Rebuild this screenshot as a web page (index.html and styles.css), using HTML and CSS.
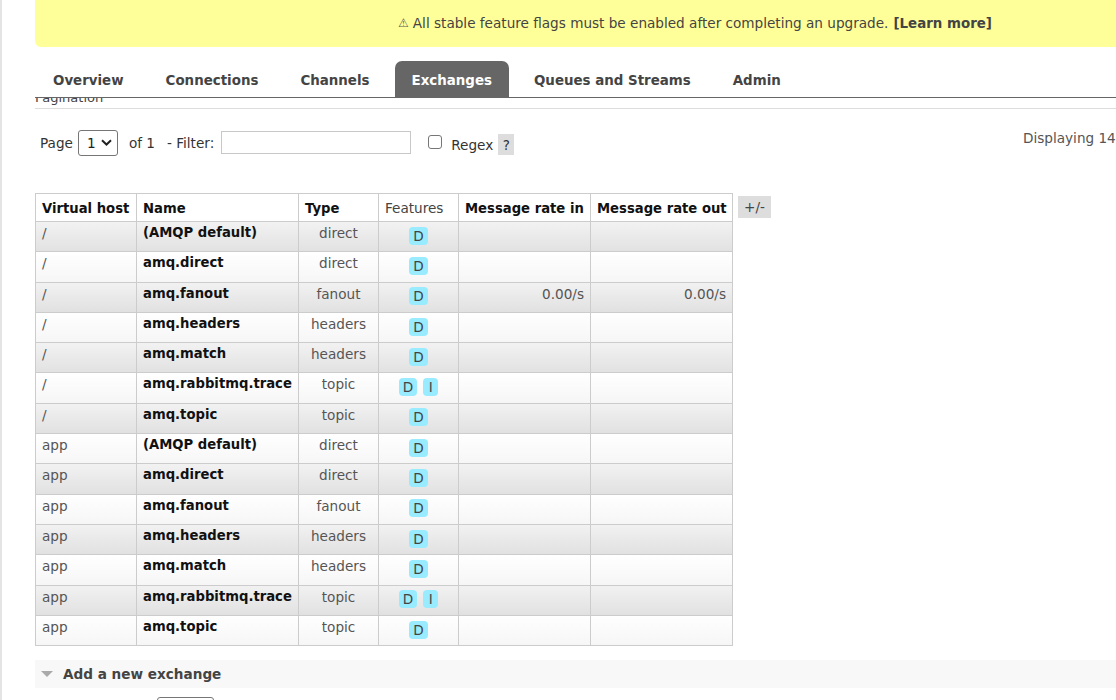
FILE: index.html
```html
<!DOCTYPE html>
<html>
<head>
<meta charset="utf-8">
<link rel="stylesheet" href="styles.css">
</head>
<body>
<div class="frame">
  <div class="banner">
    <span class="warn">⚠</span><span>All stable feature flags must be enabled after completing an upgrade.</span><b class="learn">[Learn more]</b>
  </div>
  <ul class="tabs">
    <li>Overview</li>
    <li>Connections</li>
    <li>Channels</li>
    <li class="active">Exchanges</li>
    <li>Queues and Streams</li>
    <li>Admin</li>
  </ul>
  <div class="main">
    <h2 class="sec-title">Pagination</h2>
    <div class="pager">
      <div class="pager-left">
        <span class="lbl">Page</span>
        <span class="select"><span class="sel-val">1</span><svg class="chev" width="11" height="7" viewBox="0 0 11 7"><path d="M1 1.2 L5.5 5.5 L10 1.2" fill="none" stroke="#222" stroke-width="2"/></svg></span>
        <span class="of">of 1</span>
        <span class="filter-lbl">- Filter:</span>
        <span class="text-input"></span>
        <span class="checkbox"></span>
        <span class="regex">Regex</span>
        <span class="help">?</span>
      </div>
      <div class="pager-right">
        <span>Displaying 14 items , page size up to:</span>
        <span class="size-input">100</span>
      </div>
    </div>

    <div class="table-wrap">
      <table class="list">
        <thead>
          <tr>
            <th class="c-vhost">Virtual host</th>
            <th class="c-name">Name</th>
            <th class="c-type">Type</th>
            <th class="c-feat plain">Features</th>
            <th class="c-in">Message rate in</th>
            <th class="c-out">Message rate out</th>
          </tr>
        </thead>
        <tbody>
          <tr class="alt1"><td>/</td><td class="name">(AMQP default)</td><td class="ctr">direct</td><td class="feat"><abbr>D</abbr></td><td class="num"></td><td class="num"></td></tr>
          <tr class="alt2"><td>/</td><td class="name">amq.direct</td><td class="ctr">direct</td><td class="feat"><abbr>D</abbr></td><td class="num"></td><td class="num"></td></tr>
          <tr class="alt1"><td>/</td><td class="name">amq.fanout</td><td class="ctr">fanout</td><td class="feat"><abbr>D</abbr></td><td class="num">0.00/s</td><td class="num">0.00/s</td></tr>
          <tr class="alt2"><td>/</td><td class="name">amq.headers</td><td class="ctr">headers</td><td class="feat"><abbr>D</abbr></td><td class="num"></td><td class="num"></td></tr>
          <tr class="alt1"><td>/</td><td class="name">amq.match</td><td class="ctr">headers</td><td class="feat"><abbr>D</abbr></td><td class="num"></td><td class="num"></td></tr>
          <tr class="alt2"><td>/</td><td class="name">amq.rabbitmq.trace</td><td class="ctr">topic</td><td class="feat"><abbr>D</abbr><abbr>I</abbr></td><td class="num"></td><td class="num"></td></tr>
          <tr class="alt1"><td>/</td><td class="name">amq.topic</td><td class="ctr">topic</td><td class="feat"><abbr>D</abbr></td><td class="num"></td><td class="num"></td></tr>
          <tr class="alt2"><td>app</td><td class="name">(AMQP default)</td><td class="ctr">direct</td><td class="feat"><abbr>D</abbr></td><td class="num"></td><td class="num"></td></tr>
          <tr class="alt1"><td>app</td><td class="name">amq.direct</td><td class="ctr">direct</td><td class="feat"><abbr>D</abbr></td><td class="num"></td><td class="num"></td></tr>
          <tr class="alt2"><td>app</td><td class="name">amq.fanout</td><td class="ctr">fanout</td><td class="feat"><abbr>D</abbr></td><td class="num"></td><td class="num"></td></tr>
          <tr class="alt1"><td>app</td><td class="name">amq.headers</td><td class="ctr">headers</td><td class="feat"><abbr>D</abbr></td><td class="num"></td><td class="num"></td></tr>
          <tr class="alt2"><td>app</td><td class="name">amq.match</td><td class="ctr">headers</td><td class="feat"><abbr>D</abbr></td><td class="num"></td><td class="num"></td></tr>
          <tr class="alt1"><td>app</td><td class="name">amq.rabbitmq.trace</td><td class="ctr">topic</td><td class="feat"><abbr>D</abbr><abbr>I</abbr></td><td class="num"></td><td class="num"></td></tr>
          <tr class="alt2"><td>app</td><td class="name">amq.topic</td><td class="ctr">topic</td><td class="feat"><abbr>D</abbr></td><td class="num"></td><td class="num"></td></tr>
        </tbody>
      </table>
      <span class="plus-minus">+/-</span>
    </div>

    <div class="add-section">
      <span class="tri"></span>
      <span class="add-title">Add a new exchange</span>
    </div>
    <div class="form-row">
      <span class="form-lbl">Virtual host:</span>
      <span class="form-select">/</span>
    </div>
  </div>
</div>
</body>
</html>
```

FILE: styles.css
```css
html {
  overflow: hidden;
}
body {
  margin: 0;
  font-family: "DejaVu Sans", Verdana, sans-serif;
  font-size: 13.6px;
  color: #484848;
  background: #fff;
}
.frame {
  border-left: 2px solid #e4e4e4;
  padding-left: 33px;
  width: 1320px;
  height: 700px;
}

/* banner */
.banner {
  height: 47px;
  background: #ffff99;
  border-radius: 0 0 6px 6px;
  display: flex;
  align-items: center;
  justify-content: center;
  color: #444;
  padding-bottom: 1px;
  box-sizing: border-box;
}
.warn {
  font-size: 12px;
  margin-right: 4px;
  color: #555;
}
.learn {
  margin-left: 5px;
  color: #444;
  font-size: 13.4px;
}

/* tabs */
.tabs {
  display: flex;
  list-style: none;
  margin: 14px 0 0;
  padding: 0 0 0 1px;
  border-bottom: 1px solid #666;
}
.tabs li {
  height: 36px;
  line-height: 39px;
  padding: 0 17px;
  margin-right: 8px;
  font-weight: bold;
  font-size: 13.4px;
  color: #444;
  border-radius: 7px 7px 0 0;
}
.tabs li.active {
  background: #666;
  color: #fff;
}

/* main scroll area */
.main {
  height: 602px;
  overflow: hidden;
}
.sec-title {
  margin: -8px 0 0;
  font-size: 13px;
  font-weight: normal;
  line-height: 16px;
  padding-bottom: 2px;
  border-bottom: 1px solid #ddd;
  color: #444;
}

/* pager */
.pager {
  display: grid;
  grid-template-columns: 983px auto;
  margin-top: 20px;
  padding-left: 5px;
  color: #333;
}
.pager-left {
  display: flex;
  align-items: center;
  height: 27px;
}
.select {
  display: inline-flex;
  align-items: center;
  box-sizing: border-box;
  width: 40px;
  height: 26px;
  border: 1px solid #767676;
  border-radius: 3px;
  margin-left: 5px;
  padding-left: 8px;
  color: #222;
}
.chev {
  margin-left: 5px;
}
.of {
  margin-left: 11px;
}
.filter-lbl {
  margin-left: 12px;
}
.text-input {
  box-sizing: border-box;
  width: 190px;
  height: 23px;
  border: 1px solid #c8c8c8;
  margin-left: 7px;
}
.checkbox {
  box-sizing: border-box;
  width: 14px;
  height: 14px;
  border: 1px solid #767676;
  border-radius: 3px;
  margin-left: 17px;
  margin-top: -1px;
}
.regex {
  margin-left: 9px;
  margin-top: 4px;
}
.help {
  margin-left: 5px;
  margin-top: 4px;
  background: #ddd;
  width: 16px;
  height: 21px;
  line-height: 22px;
  text-align: center;
}
.pager-right {
  display: flex;
  align-items: flex-start;
  white-space: nowrap;
  color: #555;
  line-height: 16px;
  padding-top: 1px;
}
.size-input {
  margin-left: 6px;
  border: 1px solid #c8c8c8;
  padding: 2px 6px;
}

/* table */
.table-wrap {
  display: flex;
  align-items: flex-start;
  margin-top: 37px;
}
table.list {
  border-collapse: collapse;
  width: 698px;
  table-layout: fixed;
}
table.list th,
table.list td {
  border: 1px solid #ccc;
  padding: 0 6px;
  white-space: nowrap;
}
table.list th {
  height: 25px;
  text-align: left;
  font-weight: bold;
  font-size: 13.2px;
  color: #111;
  background: #fff;
  padding-top: 2px;
  vertical-align: middle;
  overflow: visible;
}
table.list th.plain {
  font-weight: normal;
  font-size: 13.6px;
  color: #444;
  padding-top: 1px;
}
.c-vhost { width: 88px; }
.c-name { width: 149px; }
.c-type { width: 67px; }
.c-feat { width: 67px; }
.c-in { width: 119px; }
.c-out { width: 129px; }

table.list td {
  height: 30.3px;
  vertical-align: top;
  padding-top: 3px;
  padding-bottom: 0;
  box-sizing: border-box;
  color: #555;
  line-height: 16px;
}
table.list td.name {
  font-weight: bold;
  font-size: 13.2px;
  color: #111;
}
table.list td.ctr {
  text-align: center;
}
table.list td.num {
  text-align: right;
}
table.list td.feat {
  text-align: center;
  vertical-align: middle;
  padding-top: 2px;
  font-size: 0;
}
tr.alt1 {
  background: linear-gradient(#f2f2f2, #e1e1e1);
}
tr.alt2 {
  background: linear-gradient(#ffffff, #f6f6f6);
}
abbr {
  display: inline-block;
  font-size: 13.6px;
  text-decoration: none;
  background: #99ebff;
  color: #444;
  border-radius: 4px;
  height: 18px;
  line-height: 19px;
  padding: 0 4px;
  min-width: 7px;
  text-align: center;
  margin: 0 3px;
}
.plus-minus {
  margin-left: 5px;
  margin-top: 3px;
  background: #ddd;
  color: #444;
  height: 22px;
  line-height: 22px;
  padding: 0 6px;
}

/* add section */
.add-section {
  margin-top: 14px;
  height: 28px;
  background: #f8f8f8;
  display: flex;
  align-items: center;
}
.tri {
  width: 0;
  height: 0;
  border-left: 6px solid transparent;
  border-right: 6px solid transparent;
  border-top: 6px solid #aaa;
  margin-left: 6px;
  margin-right: 10px;
}
.add-title {
  font-weight: bold;
  font-size: 13.6px;
  color: #444;
}
.form-row {
  display: flex;
  align-items: flex-start;
  margin-top: 9px;
}
.form-lbl {
  width: 122px;
  text-align: right;
  padding-top: 12px;
}
.form-select {
  box-sizing: border-box;
  width: 57px;
  height: 24px;
  border: 1px solid #767676;
  border-radius: 3px;
  padding-left: 6px;
  line-height: 22px;
}
```
